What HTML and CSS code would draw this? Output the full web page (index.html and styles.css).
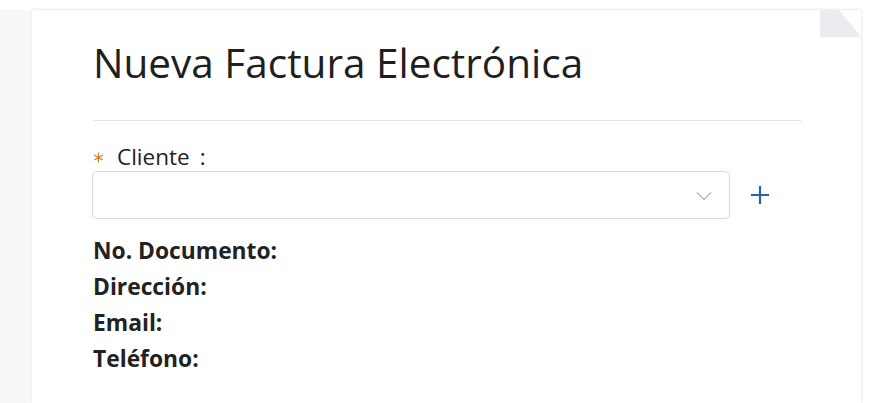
FILE: index.html
```html
<!DOCTYPE html>
<html lang="es">
<head>
<meta charset="utf-8">
<title>Nueva Factura Electrónica</title>
<link rel="stylesheet" href="styles.css">
</head>
<body>
<div class="layout">
  <div class="side"></div>
  <main class="card">
    <div class="fold"></div>
    <h1 class="title">Nueva Factura Electrónica</h1>
    <hr class="divider">
    <div class="field">
      <label class="label">
        <svg class="req" width="11" height="11" viewBox="0 0 11 11"><path d="M5.5 0.5 V10.5 M1.2 3 L9.8 8 M1.2 8 L9.8 3" stroke="#d27a2e" stroke-width="1.2" fill="none"/></svg>
        <span class="label-text">Cliente</span><span class="colon">:</span>
      </label>
      <div class="row">
        <div class="select">
          <svg class="chev" width="16" height="10" viewBox="0 0 16 10"><path d="M1 1.5 L8 8.5 L15 1.5" fill="none" stroke="#a9b9c9" stroke-width="1.3"/></svg>
        </div>
        <button class="add" type="button" aria-label="Agregar cliente">
          <svg width="20" height="20" viewBox="0 0 20 20"><path d="M10 1 V19 M1 10 H19" stroke="#2b62ab" stroke-width="2.2" fill="none"/></svg>
        </button>
      </div>
    </div>
    <div class="info">
      <div class="info-line">No. Documento:</div>
      <div class="info-line">Dirección:</div>
      <div class="info-line">Email:</div>
      <div class="info-line">Teléfono:</div>
    </div>
  </main>
  <div class="gap"></div>
</div>
</body>
</html>
```
FILE: styles.css
```css
html, body {
  margin: 0;
  padding: 0;
  background: #ffffff;
  height: 100%;
  overflow: hidden;
}
body {
  font-family: "Open Sans", "Noto Sans", sans-serif;
  color: #222222;
}
.layout {
  display: flex;
  padding-top: 10px;
  height: 393px;
}
.side {
  width: 30px;
  background: #f8f8f8;
}
.gap {
  flex: 1;
}
.card {
  position: relative;
  width: 768px;
  margin-left: 2px;
  padding: 0 0 0 61px;
  background: #ffffff;
  box-shadow: 0 0 3px rgba(0, 0, 0, 0.16);
}
.fold {
  position: absolute;
  top: -3px;
  right: -4px;
  width: 45px;
  height: 30px;
  background: linear-gradient(to top right, #ebebf0 0, #ebebf0 100%);
  clip-path: polygon(0 3px, 19px 3px, 41px 30px, 0 30px);
}
.title {
  margin: 0;
  padding-top: 26px;
  font-size: 40.5px;
  font-weight: 500;
  line-height: 54px;
  color: #1f1f1f;
}
.divider {
  margin: 30px 0 0 0;
  width: 708px;
  border: 0;
  border-top: 1px solid #e3e3e3;
}
.field {
  margin-top: 22px;
}
.label {
  display: flex;
  align-items: center;
  font-size: 22.5px;
  line-height: 28px;
  color: #222222;
}
.req {
  display: block;
  margin-right: 13px;
  margin-top: 1px;
}
.colon {
  margin-left: 10px;
}
.row {
  display: flex;
  align-items: center;
  gap: 20px;
}
.select {
  box-sizing: border-box;
  width: 638px;
  height: 48px;
  margin-left: -1px;
  border: 1px solid #d9d9d9;
  border-radius: 5px;
  display: flex;
  align-items: center;
  justify-content: flex-end;
  padding-right: 17px;
}
.chev {
  display: block;
  margin-top: 2px;
}
.add {
  border: 0;
  background: none;
  padding: 0;
  width: 20px;
  height: 20px;
  margin-top: -1px;
}
.add svg {
  display: block;
}
.info {
  margin-top: 14px;
}
.info-line {
  font-size: 22.8px;
  font-weight: 700;
  line-height: 36px;
  color: #222222;
}
```
